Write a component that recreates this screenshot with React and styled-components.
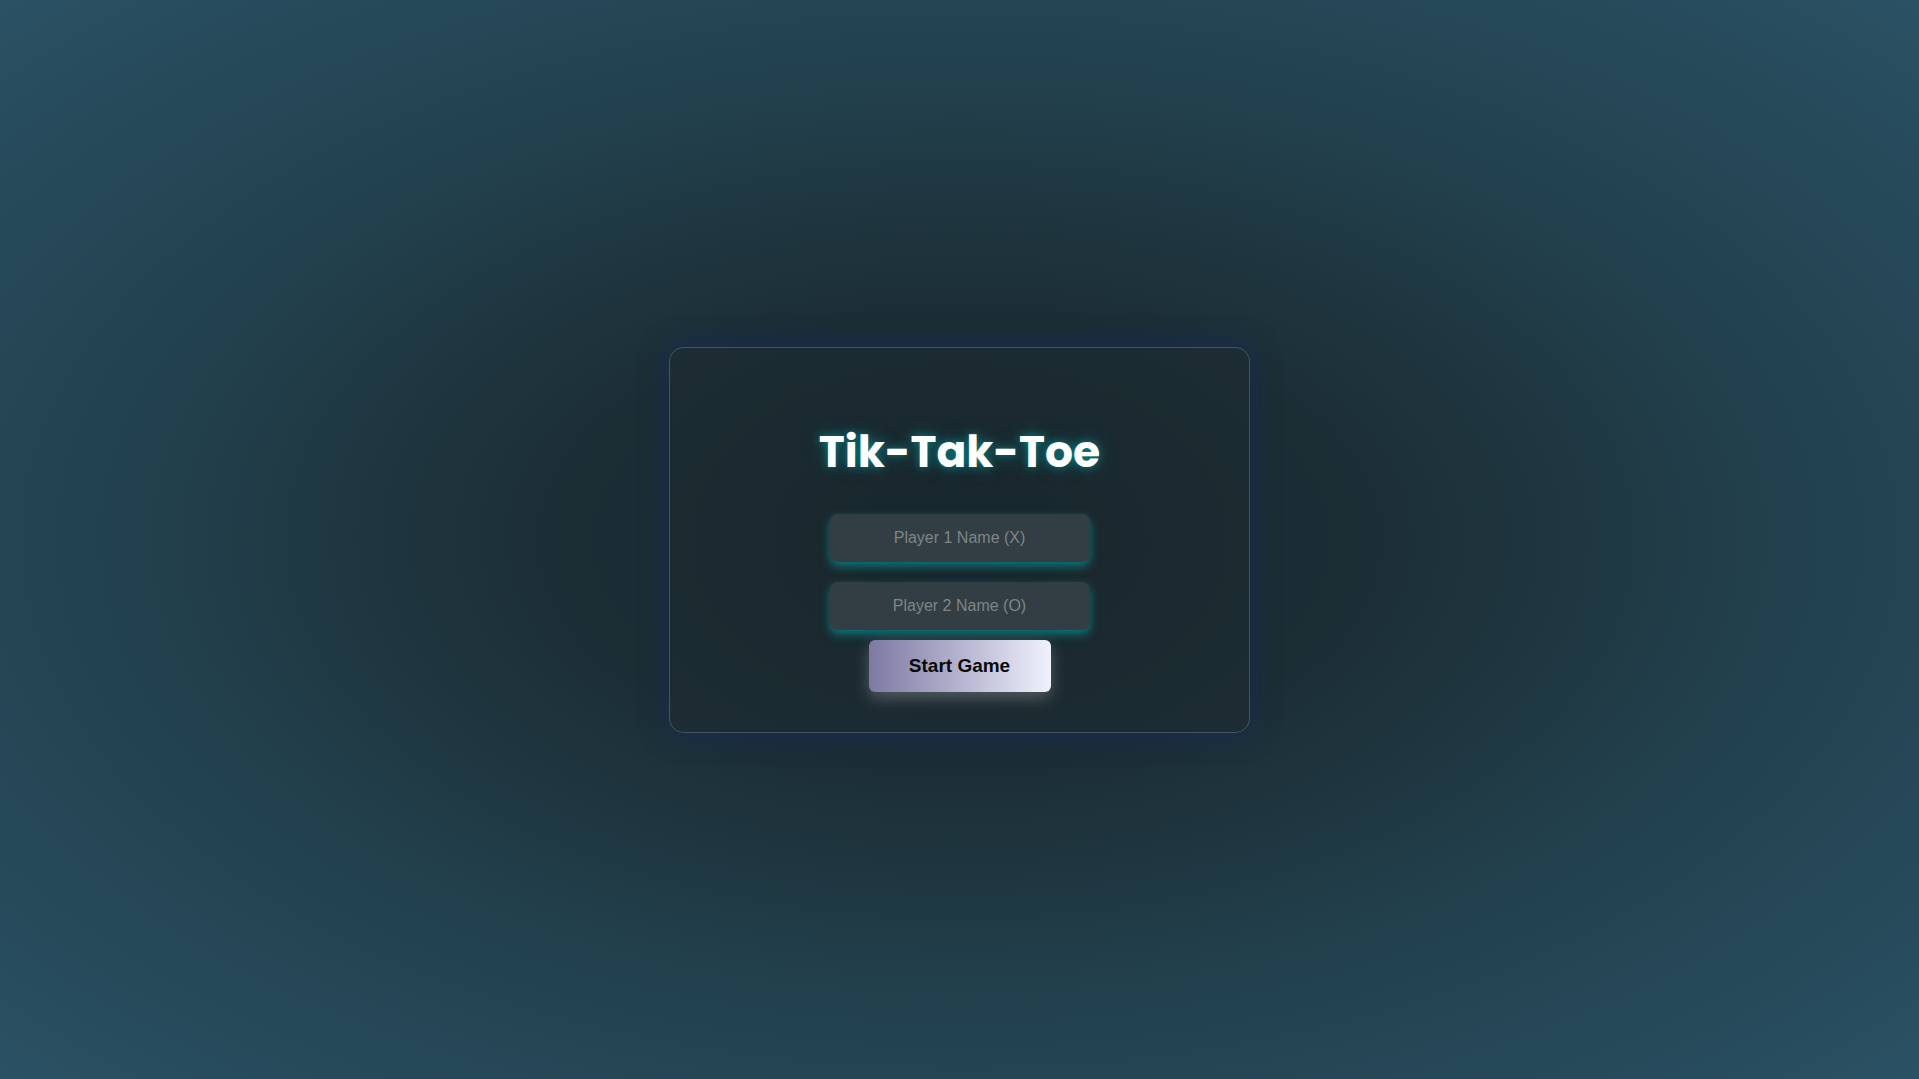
import styled, { createGlobalStyle } from "styled-components";

export default function App() {
  return (
    <>
      <GlobalStyle />
      <Page>
        <Card>
          <Title>Tik-Tak-Toe</Title>
          <NameInput type="text" placeholder="Player 1 Name (X)" />
          <NameInput type="text" placeholder="Player 2 Name (O)" />
          <StartButton type="button">Start Game</StartButton>
        </Card>
      </Page>
    </>
  );
}

const GlobalStyle = createGlobalStyle`
  html, body {
    margin: 0;
    height: 100%;
  }

  body {
    font-family: "Liberation Sans", Arial, sans-serif;
  }

  #root {
    height: 100%;
  }
`;

const Page = styled.main`
  min-height: 100vh;
  display: flex;
  align-items: center;
  justify-content: center;

  background: radial-gradient(
    ellipse at center,
    #1a2a30 0%,
    #1c2e35 30%,
    #22404d 60%,
    #2a5164 100%
  );
`;

const Card = styled.section`
  box-sizing: border-box;
  width: 581px;
  height: 386px;
  padding: 78px 40px 40px;

  display: flex;
  flex-direction: column;
  align-items: center;

  background: radial-gradient(
    ellipse at center,
    rgba(24, 38, 44, 0.9) 0%,
    rgba(30, 45, 52, 0.85) 100%
  );
  border: 1px solid rgba(255, 255, 255, 0.18);
  border-radius: 15px;
  box-shadow: 0 0 28px rgba(20, 40, 110, 0.55);
`;

const Title = styled.h1`
  margin: 0 0 26px;

  font-family: "Poppins", "Inter", sans-serif;
  font-size: 44px;
  font-weight: 700;
  line-height: 1.2;
  color: #ffffff;
  text-shadow: 0 0 8px rgba(0, 180, 180, 0.55), 0 0 18px rgba(0, 150, 150, 0.4);
`;

const NameInput = styled.input`
  box-sizing: border-box;
  width: 260px;
  height: 48px;
  margin: 10px 0;
  padding: 0 12px;

  font-family: "Liberation Sans", Arial, sans-serif;
  font-size: 16px;
  text-align: center;
  color: #e6e6e6;

  background: #323e43;
  border: none;
  border-radius: 8px;
  outline: none;
  box-shadow: 0 4px 10px rgba(0, 175, 175, 0.6);

  &::placeholder {
    color: #7e8587;
  }
`;

const StartButton = styled.button`
  box-sizing: border-box;
  width: 182px;
  height: 52px;

  font-family: "Liberation Sans", Arial, sans-serif;
  font-size: 19px;
  font-weight: 700;
  color: #0a0a0a;

  background: linear-gradient(90deg, #7d79a2 0%, #b5b3cf 50%, #eff2fd 100%);
  border: none;
  border-radius: 6px;
  box-shadow: 0 6px 16px rgba(190, 190, 190, 0.35);
  cursor: pointer;
`;
